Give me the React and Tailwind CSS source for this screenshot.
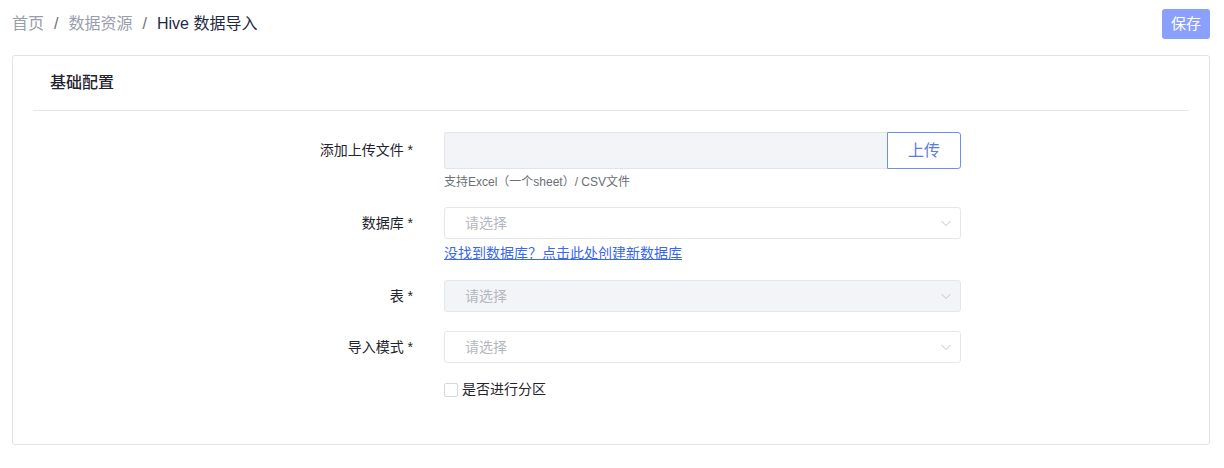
import React, { useState } from 'react';

const FONT = { fontFamily: '"Helvetica Neue", "Liberation Sans", "Noto Sans CJK SC", sans-serif' };

const Chevron = () => (
  <svg width="12" height="12" viewBox="0 0 12 12" fill="none" className="text-[#c0c4cc]">
    <path d="M1.5 4l4.5 4.5L10.5 4" stroke="currentColor" strokeWidth="1" />
  </svg>
);

const Select = ({ disabled }) => (
  <div
    className={`flex h-[32px] w-[517px] items-center justify-between rounded-[3px] border border-[#e4e7ed] px-[20px] pr-[8px] ${
      disabled ? 'bg-[#f3f4f8]' : 'bg-white'
    }`}
  >
    <span className="text-[14px] text-[#b4b7bf]">请选择</span>
    <Chevron />
  </div>
);

const Label = ({ children }) => (
  <div className="w-[411px] shrink-0 pr-[31px] text-right text-[14px] text-[#1f2430]">{children} *</div>
);

export default function App() {
  const [partition, setPartition] = useState(false);

  return (
    <div className="min-h-[468px] bg-white pl-[12px] pr-[14px] pt-[9px] pb-[24px]" style={FONT}>
      {/* header */}
      <div className="flex items-center justify-between">
        <div className="flex items-center text-[16px]">
          <span className="text-[#9a9caf]">首页</span>
          <span className="mx-[10px] text-[#6b6e80]">/</span>
          <span className="text-[#9a9caf]">数据资源</span>
          <span className="mx-[10px] text-[#6b6e80]">/</span>
          <span className="text-[#1f2944]">Hive 数据导入</span>
        </div>
        <button className="h-[30px] w-[48px] rounded-[3px] bg-[#8b9ffc] text-[15px] text-white">保存</button>
      </div>

      {/* card */}
      <div className="mt-[16px] h-[390px] rounded-[3px] border border-[#e2e3e6] px-[20px]">
        <div className="border-b border-[#e6e7ea] pt-[15px] pb-[15px] pl-[17px] text-[16px] font-medium text-[#1f2430]">
          基础配置
        </div>

        <div className="pt-[21px]">
          {/* upload */}
          <div className="flex items-start">
            <div className="flex h-[37px] items-center">
              <Label>添加上传文件</Label>
            </div>
            <div>
              <div className="flex h-[37px] w-[517px]">
                <div className="flex-1 rounded-l-[3px] border border-r-0 border-[#e2e4ea] bg-[#f3f4f7]" />
                <button className="w-[74px] rounded-r-[3px] border border-[#6f8ef0] bg-white text-[16px] text-[#5b7ce6]">
                  上传
                </button>
              </div>
              <div className="mt-[4px] text-[12px] text-[#6b6e76]">支持Excel（一个sheet）/ CSV文件</div>
            </div>
          </div>

          {/* database */}
          <div className="mt-[16px] flex items-start">
            <div className="flex h-[32px] items-center">
              <Label>数据库</Label>
            </div>
            <div>
              <Select />
              <a href="#" className="mt-[4px] block text-[14px] text-[#3a67f0] underline">
                没找到数据库？点击此处创建新数据库
              </a>
            </div>
          </div>

          {/* table */}
          <div className="mt-[16px] flex items-center">
            <Label>表</Label>
            <Select disabled />
          </div>

          {/* mode */}
          <div className="mt-[19px] flex items-center">
            <Label>导入模式</Label>
            <Select />
          </div>

          {/* partition */}
          <div className="mt-[16px] flex items-center">
            <div className="w-[411px] shrink-0" />
            <label className="flex cursor-pointer items-center gap-[4px] text-[14px] text-[#1f2430]">
              <input
                type="checkbox"
                checked={partition}
                onChange={(e) => setPartition(e.target.checked)}
                className="h-[14px] w-[14px] appearance-none rounded-[2px] border border-[#d4d7de] bg-white"
              />
              是否进行分区
            </label>
          </div>
        </div>
      </div>
    </div>
  );
}
